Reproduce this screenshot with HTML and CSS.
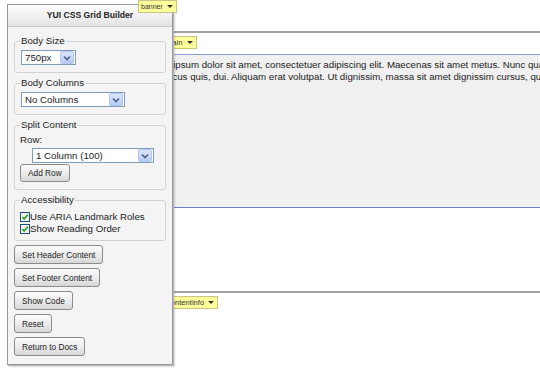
FILE: index.html
```html
<!DOCTYPE html>
<html lang="en">
<head>
  <meta charset="UTF-8">
  <title>YUI CSS Grid Builder</title>
  <link rel="stylesheet" href="styles.css">
</head>
<body>

  <div class="doc">
    <div class="hd">
      <span class="tag tag-banner">banner <i class="caret"></i></span>
    </div>
    <div class="bd">
      <span class="tag tag-inner">main <i class="caret"></i></span>
      <div class="main-box">
        <p>Lorem ipsum dolor sit amet, consectetuer adipiscing elit. Maecenas sit amet metus. Nunc quam elit, posuere nec, auctor in, rhoncus quis, dui. Aliquam erat volutpat. Ut dignissim, massa sit amet dignissim cursus, quam lacus feugiat.</p>
      </div>
    </div>
    <div class="ft">
      <span class="tag tag-inner tag-ft">contentinfo <i class="caret"></i></span>
    </div>
  </div>

  <div class="builder">
    <div class="builder-hd">YUI CSS Grid Builder</div>
    <div class="builder-bd">

      <fieldset class="group">
        <legend>Body Size</legend>
        <div class="select select-size">
          <span>750px</span>
          <span class="select-btn"><svg width="8" height="6" viewBox="0 0 8 6"><path d="M1 1.5 L4 4.5 L7 1.5" fill="none" stroke="#4d6185" stroke-width="1.6"/></svg></span>
        </div>
      </fieldset>

      <fieldset class="group">
        <legend>Body Columns</legend>
        <div class="select select-cols">
          <span>No Columns</span>
          <span class="select-btn"><svg width="8" height="6" viewBox="0 0 8 6"><path d="M1 1.5 L4 4.5 L7 1.5" fill="none" stroke="#4d6185" stroke-width="1.6"/></svg></span>
        </div>
      </fieldset>

      <fieldset class="group">
        <legend>Split Content</legend>
        <div class="row-label">Row:</div>
        <div class="select select-row">
          <span>1 Column (100)</span>
          <span class="select-btn"><svg width="8" height="6" viewBox="0 0 8 6"><path d="M1 1.5 L4 4.5 L7 1.5" fill="none" stroke="#4d6185" stroke-width="1.6"/></svg></span>
        </div>
        <button class="btn btn-add">Add Row</button>
      </fieldset>

      <fieldset class="group group-access">
        <legend>Accessibility</legend>
        <label class="check">
          <svg width="10" height="10" viewBox="0 0 10 10"><rect x="0.5" y="0.5" width="9" height="9" fill="#f3f3ee" stroke="#1f4f7e"/><path d="M2.3 5 L4.2 7 L7.8 2.8" fill="none" stroke="#22a322" stroke-width="1.6"/></svg>Use ARIA Landmark Roles
        </label>
        <label class="check">
          <svg width="10" height="10" viewBox="0 0 10 10"><rect x="0.5" y="0.5" width="9" height="9" fill="#f3f3ee" stroke="#1f4f7e"/><path d="M2.3 5 L4.2 7 L7.8 2.8" fill="none" stroke="#22a322" stroke-width="1.6"/></svg>Show Reading Order
        </label>
      </fieldset>

      <div class="actions">
        <button class="btn">Set Header Content</button>
        <button class="btn">Set Footer Content</button>
        <button class="btn">Show Code</button>
        <button class="btn">Reset</button>
        <button class="btn">Return to Docs</button>
      </div>

    </div>
  </div>

</body>
</html>
```

FILE: styles.css
```css
body {
  margin: 0;
  font-family: "Liberation Sans", Arial, sans-serif;
  background: #fff;
  color: #222;
  overflow: hidden;
}

/* page behind the builder */

.doc {
  margin-left: 138px;
  width: 760px;
}

.hd {
  height: 31px;
  border-bottom: 2px solid #a3a3a3;
}

.tag {
  display: inline-block;
  height: 11px;
  line-height: 11px;
  padding: 0 3px 0 2px;
  background: #ffff9c;
  border: 1px solid #c6c682;
  font-size: 7.6px;
  color: #333;
  vertical-align: top;
}

.caret {
  display: inline-block;
  width: 0;
  height: 0;
  margin-left: 2px;
  border-left: 3px solid transparent;
  border-right: 3px solid transparent;
  border-top: 3px solid #333;
  vertical-align: 1px;
}

.tag-banner {
  position: relative;
  z-index: 2;
  font-size: 7px;
}

.tag-inner {
  margin-left: 25px;
}

.tag-ft {
  margin-left: 26px;
}

.bd {
  padding-top: 3px;
}

.main-box {
  height: 148px;
  padding: 4px 5px 0 15px;
  background: #f0f0f0;
  border-top: 1px solid #8e9bd2;
  border-bottom: 1px solid #7182c2;
}

.main-box p {
  margin: 0;
  width: 543px;
  text-indent: -10px;
  font-size: 9.7px;
  line-height: 12px;
  color: #222;
}

.ft {
  margin-top: 83px;
  padding-top: 3px;
  border-top: 2px solid #a3a3a3;
}

/* floating builder panel */

.builder {
  position: absolute;
  left: 7px;
  top: 4px;
  z-index: 1;
  width: 166px;
  box-sizing: border-box;
  background: #f4f4f4;
  border: 1px solid #999;
  box-shadow: 1px 1px 0 #b5b5b5, 2px 2px 2px rgba(0,0,0,0.15);
}

.builder-hd {
  height: 21px;
  line-height: 21px;
  text-align: center;
  font-size: 8.6px;
  font-weight: bold;
  color: #222;
  background: linear-gradient(#fefefe, #e3e3e3);
  border-bottom: 1px solid #c9c9c9;
}

.builder-bd {
  display: flex;
  flex-direction: column;
  gap: 4px;
  padding: 8px 6px 8px;
}

.group {
  margin: 0;
  padding: 3px 5px 7px;
  border: 1px solid #d3d3d3;
  border-radius: 3px;
}

.group legend {
  padding: 0 1px;
  font-size: 9.7px;
  line-height: 12px;
  color: #222;
}

.select {
  display: flex;
  align-items: center;
  justify-content: space-between;
  height: 15px;
  box-sizing: border-box;
  margin-left: 1px;
  padding: 0 1px 0 3px;
  background: #fff;
  border: 1px solid #7f9db9;
  font-size: 9.7px;
  color: #222;
}

.select-size { width: 55px; }
.select-cols { width: 104px; }

.select-row {
  width: 122px;
  margin: 2px 0 0 12px;
}

.select-btn {
  display: flex;
  align-items: center;
  justify-content: center;
  width: 12px;
  height: 11px;
  background: linear-gradient(#dbe5fc, #b9cbf5);
  border: 1px solid #b3c6ef;
  border-radius: 2px;
}

.row-label {
  font-size: 9.7px;
  line-height: 12px;
}

.btn {
  display: block;
  height: 19px;
  padding: 0 7px;
  font-family: "Liberation Sans", Arial, sans-serif;
  font-size: 8.3px;
  color: #222;
  background: linear-gradient(#fdfdfd, #e9e9e9 60%, #d6d6d6);
  border: 1px solid #8c8c8c;
  border-radius: 3px;
}

.btn-add {
  height: 18px;
  margin-top: 1px;
}

.group-access {
  padding-top: 5px;
  padding-bottom: 5px;
}

.check {
  display: flex;
  align-items: center;
  font-size: 9.7px;
  line-height: 12px;
}

.actions {
  display: flex;
  flex-direction: column;
  align-items: flex-start;
  gap: 4px;
}
```
